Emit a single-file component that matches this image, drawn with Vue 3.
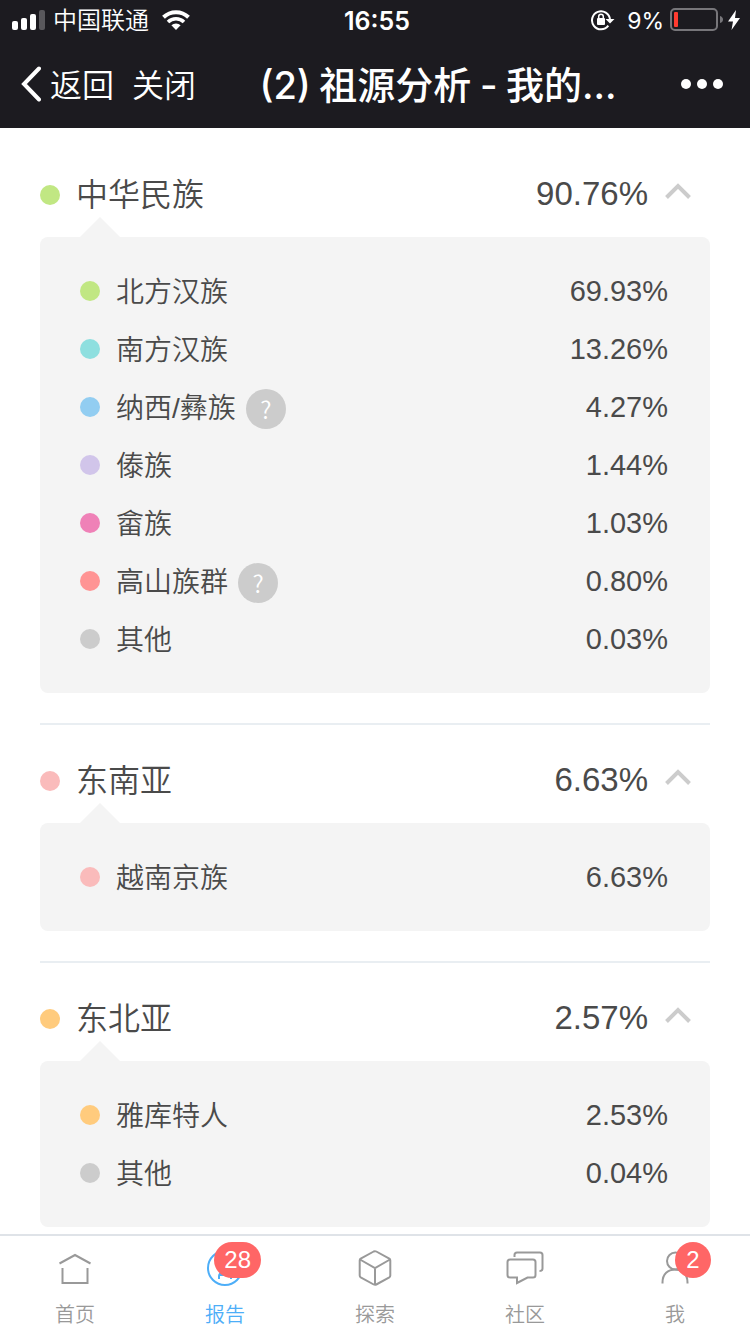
<script setup>
import { ref } from 'vue'

const groups = ref([
  {
    name: '中华民族', value: '90.76%', color: '#c1e783', open: true,
    items: [
      { name: '北方汉族', value: '69.93%', color: '#c1e783' },
      { name: '南方汉族', value: '13.26%', color: '#8edfdf' },
      { name: '纳西/彝族', value: '4.27%', color: '#92cdf1', help: true },
      { name: '傣族', value: '1.44%', color: '#d1c5ea' },
      { name: '畲族', value: '1.03%', color: '#ef81b7' },
      { name: '高山族群', value: '0.80%', color: '#ff9494', help: true },
      { name: '其他', value: '0.03%', color: '#cccccc' },
    ],
  },
  {
    name: '东南亚', value: '6.63%', color: '#fabbbb', open: true,
    items: [{ name: '越南京族', value: '6.63%', color: '#fabbbb' }],
  },
  {
    name: '东北亚', value: '2.57%', color: '#ffcb7d', open: true,
    items: [
      { name: '雅库特人', value: '2.53%', color: '#ffcb7d' },
      { name: '其他', value: '0.04%', color: '#cccccc' },
    ],
  },
])

const tabs = [
  { id: 'home', label: '首页' },
  { id: 'report', label: '报告', badge: '28', active: true },
  { id: 'explore', label: '探索' },
  { id: 'community', label: '社区' },
  { id: 'me', label: '我', badge: '2' },
]
</script>

<template>
  <div class="page">
    <header class="top">
      <div class="status">
        <div class="status-side">
          <svg class="signal" width="34" height="20" viewBox="0 0 34 20" fill="#fff">
            <rect x="0" y="11" width="6" height="9" rx="2" />
            <rect x="9" y="8" width="6" height="12" rx="2" />
            <rect x="18" y="4" width="6" height="16" rx="2" />
            <rect x="27" y="0" width="6" height="20" rx="2" fill="#59585c" />
          </svg>
          <span class="carrier">中国联通</span>
          <svg class="wifi" width="28" height="20" viewBox="0 0 28 20">
            <path d="M1.5 7.2A18 18 0 0 1 26.500 7.200" fill="none" stroke="#fff" stroke-width="4" />
            <path d="M6 12A11.500 11.500 0 0 1 22 12" fill="none" stroke="#fff" stroke-width="3.600" />
            <path d="M14 20l-4.600-4.700a6.600 6.600 0 0 1 9.200 0z" fill="#fff" />
          </svg>
        </div>
        <time class="clock">16:55</time>
        <div class="status-side end">
          <svg width="24" height="22" viewBox="0 0 24 22">
            <path d="M17.300 16.600A9 9 0 1 1 19 10.500" fill="none" stroke="#fff" stroke-width="2" />
            <path d="M14.500 10h9l-4.500 4.500z" fill="#fff" />
            <rect x="6" y="9" width="8" height="7" rx="1" fill="#fff" />
            <path d="M7.700 10V7.500a2.300 2.300 0 0 1 4.600 0V10" fill="none" stroke="#fff" stroke-width="1.500" />
          </svg>
          <span class="percent">9%</span>
          <svg width="54" height="24" viewBox="0 0 54 24">
            <rect x="1" y="1" width="46" height="21" rx="4" fill="none" stroke="#77767a" stroke-width="2" />
            <rect x="4" y="4" width="4" height="15" rx="1" fill="#ff3b30" />
            <path d="M50 8q3 1 3 3.500t-3 3.500z" fill="#77767a" />
          </svg>
          <svg class="bolt" width="12" height="20" viewBox="0 0 12 20">
            <path d="M8 0L0 11.500h5L3.500 20 12 8H7z" fill="#fff" />
          </svg>
        </div>
      </div>
      <nav class="nav">
        <button class="nav-btn" type="button">
          <svg width="21" height="36" viewBox="0 0 21 36">
            <path d="M19 2.500L4 18l15 15.500" fill="none" stroke="#fff" stroke-width="4" stroke-linecap="round" />
          </svg>
          <span class="nav-text">返回</span>
        </button>
        <button class="nav-btn close" type="button"><span class="nav-text">关闭</span></button>
        <h1 class="title"><span class="latin">(2)</span> 祖源分析 <span class="latin">-</span> 我的<span class="latin">...</span></h1>
        <button class="nav-btn" type="button" aria-label="更多">
          <svg width="44" height="12" viewBox="0 0 44 12" fill="#fff">
            <circle cx="6" cy="6" r="5" /><circle cx="22" cy="6" r="5" /><circle cx="38" cy="6" r="5" />
          </svg>
        </button>
      </nav>
    </header>

    <main class="content">
      <section v-for="group in groups" :key="group.name" class="group">
        <button class="group-head" type="button" :aria-expanded="group.open" @click="group.open = !group.open">
          <i class="dot" :style="{ background: group.color }"></i>
          <span class="name">{{ group.name }}</span>
          <span class="value">{{ group.value }}</span>
          <svg class="chevron" :class="{ closed: !group.open }" width="26" height="16" viewBox="0 0 26 16">
            <path d="M1.500 14.500L13 3l11.500 11.500" fill="none" stroke="#ccc" stroke-width="4" />
          </svg>
        </button>
        <ul v-if="group.open" class="panel">
          <li v-for="item in group.items" :key="item.name" class="row">
            <i class="dot" :style="{ background: item.color }"></i>
            <span class="name">{{ item.name }}<button v-if="item.help" class="help" type="button">?</button></span>
            <span class="value">{{ item.value }}</span>
          </li>
        </ul>
      </section>
    </main>

    <nav class="tabs">
      <a v-for="tab in tabs" :key="tab.id" class="tab" :class="{ active: tab.active }" href="#">
        <svg width="40" height="40" viewBox="0 0 40 40" fill="none" stroke="currentColor" stroke-width="2">
          <template v-if="tab.id === 'home'">
            <path d="M4.500 14.500L20 6l15.500 8.500" />
            <path d="M7.500 19v15h25V19" />
          </template>
          <template v-else-if="tab.id === 'report'">
            <circle cx="20" cy="19" r="17" />
            <path d="M14 30v-3q0-3 6-6 6-3 6-6v-5M26 30v-3q0-3-6-6-6-3-6-6v-5M15 26h10" />
          </template>
          <template v-else-if="tab.id === 'explore'">
            <path d="M18.700 2.500L5.700 9.700q-1 .6-1 1.800v15q0 1.200 1 1.800l13 7.200q1.300.7 2.600 0l13-7.200q1-.6 1-1.800v-15q0-1.200-1-1.800l-13-7.200q-1.300-.7-2.600 0zM5 10.500l15 8.500 15-8.500M20 19v16.500" />
          </template>
          <template v-else-if="tab.id === 'community'">
            <path d="M9.500 8V6q0-2.500 2.500-2.500h23q2.500 0 2.500 2.500v13.500q0 2.500-3 2.500" />
            <path d="M5 10.500h23q2.500 0 2.500 2.500v13q0 2.500-2.500 2.500h-5.500L12 34v-5.500H5Q2.500 28.500 2.500 26V13q0-2.500 2.500-2.500z" />
          </template>
          <template v-else>
            <circle cx="20.500" cy="12" r="8.500" />
            <path d="M7.500 34.500v-1C7.500 25 13 20.500 20 20.500S32.500 25 32.500 33.500v1" />
          </template>
        </svg>
        <span class="tab-label">{{ tab.label }}</span>
        <span v-if="tab.badge" class="badge">{{ tab.badge }}</span>
      </a>
    </nav>
  </div>
</template>

<style>
body {
  margin: 0;
  background: #fff;
}
</style>

<style scoped>
.page {
  display: flex;
  flex-direction: column;
  height: 100vh;
  color: #4a4a4a;
  font-family: "Liberation Sans", "Noto Sans CJK SC", sans-serif;
}
button {
  padding: 0;
  border: 0;
  background: none;
  color: inherit;
  font: inherit;
}
svg {
  display: block;
  flex: none;
}
.top {
  background: #1c1b20;
  color: #fff;
}
.status {
  display: flex;
  align-items: center;
  height: 40px;
  padding: 0 10px 0 12px;
  font-family: Inter, "Noto Sans CJK SC", sans-serif;
  font-size: 24px;
}
.status-side {
  display: flex;
  flex: 1;
  align-items: center;
}
.end {
  justify-content: flex-end;
}
.carrier {
  margin: 0 13px 0 7px;
  padding-bottom: 3px;
  font-weight: 350;
}
.clock {
  padding: 2px 0 0 2px;
  font-size: 25px;
  font-weight: 600;
  line-height: 30px;
}
.percent {
  margin: 0 6px 0 12px;
  font-size: 23px;
  line-height: 28px;
  padding-top: 2px;
}
.bolt {
  margin-left: 4px;
}
.nav {
  display: flex;
  align-items: center;
  height: 88px;
  padding: 0 26px 0 20px;
}
.nav-btn {
  display: flex;
  align-items: center;
  gap: 9px;
  font-size: 32px;
  font-weight: 350;
}
.nav-text {
  padding-bottom: 3px;
}
.close {
  margin-left: 18px;
}
.title {
  flex: 1;
  margin: 0;
  overflow: hidden;
  font-family: "Noto Sans CJK SC", sans-serif;
  font-size: 38px;
  font-weight: 500;
  line-height: 56px;
  text-align: center;
  white-space: nowrap;
}
.latin {
  font-family: Inter, sans-serif;
  font-weight: 500;
}
.content {
  flex: 1;
  min-height: 0;
  padding: 11px 40px 0;
  overflow-y: auto;
  scrollbar-width: none;
}
.group {
  padding-bottom: 30px;
  border-bottom: 2px solid #e9eef2;
}
.group-head {
  display: flex;
  align-items: center;
  width: 100%;
  height: 98px;
  padding: 14px 19px 0 0;
  font-size: 32px;
  text-align: left;
}
.dot {
  flex: none;
  width: 20px;
  height: 20px;
  margin-right: 16px;
  border-radius: 50%;
}
.name {
  display: flex;
  flex: 1;
  align-items: center;
  font-weight: 350;
}
.group-head .name {
  padding-bottom: 6px;
}
.group-head .value {
  padding-bottom: 2px;
  font-size: 33px;
}
.chevron {
  margin: 0 0 8px 17px;
}
.closed {
  transform: rotate(180deg);
}
.panel {
  position: relative;
  margin: 0;
  padding: 25px 42px 25px 40px;
  border-radius: 8px;
  background: #f4f4f4;
  list-style: none;
}
.panel::before {
  position: absolute;
  top: -20px;
  left: 40px;
  border: 20px solid transparent;
  border-top-width: 0;
  border-bottom-color: #f4f4f4;
  content: "";
}
.row {
  display: flex;
  align-items: center;
  height: 58px;
  font-size: 28px;
}
.row .name {
  padding-bottom: 2px;
}
.row .value {
  font-size: 29px;
}
.help {
  width: 40px;
  height: 40px;
  margin: 6px 0 0 10px;
  border-radius: 50%;
  background: #ccc;
  color: #fff;
  font-family: "Noto Sans CJK SC", sans-serif;
  font-size: 24px;
  line-height: 36px;
}
.tabs {
  display: flex;
  flex: none;
  border-top: 2px solid #dfe3e8;
  background: #fff;
}
.tab {
  position: relative;
  display: flex;
  flex: 1;
  flex-direction: column;
  align-items: center;
  height: 98px;
  padding-top: 13px;
  box-sizing: border-box;
  color: #999;
  text-decoration: none;
}
.active {
  color: #4daef8;
}
.tab-label {
  margin-top: 10px;
  font-size: 20px;
  font-weight: 350;
  line-height: 32px;
}
.badge {
  position: absolute;
  top: 6px;
  right: calc(50% - 36px);
  min-width: 36px;
  padding: 0 10px;
  border-radius: 18px;
  background: #ff6666;
  box-sizing: border-box;
  color: #fff;
  font-size: 24px;
  line-height: 36px;
  text-align: center;
}
</style>
